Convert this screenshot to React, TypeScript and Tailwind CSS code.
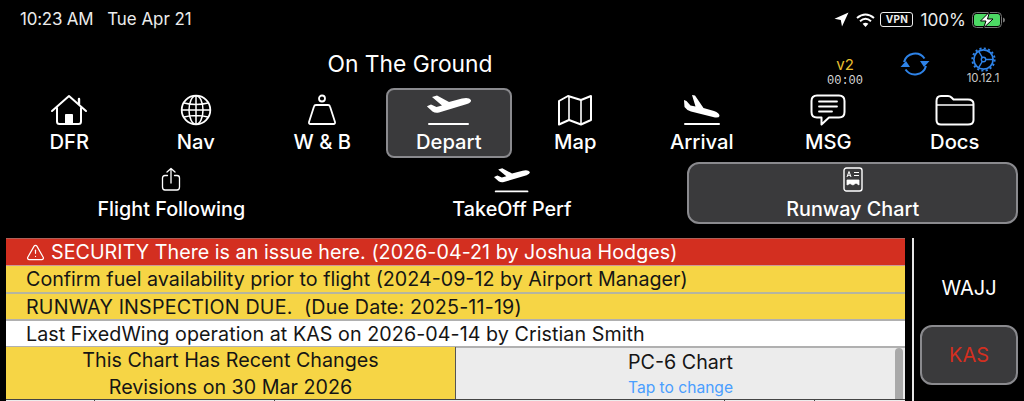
import React from 'react';
import { TriangleAlert } from 'lucide-react';

const IconHouse = () => (
  <svg width="38" height="32" viewBox="0 0 38 32" fill="none" stroke="white" strokeWidth="2" strokeLinecap="round" strokeLinejoin="round">
    <path d="M2 17 L19 2 L36 17" />
    <path d="M29 10 V5" strokeWidth="2.4" />
    <path d="M7 14 V27.5 Q7 30 9.5 30 H28.5 Q31 30 31 27.5 V14" />
    <path d="M15.5 30 V20.5 H22.5 V30 Z" fill="white" stroke="white" strokeWidth="1" />
  </svg>
);

const IconGlobe = () => (
  <svg width="32" height="32" viewBox="0 0 32 32" fill="none" stroke="white" strokeWidth="1.5">
    <circle cx="16" cy="16" r="14.3" strokeWidth="1.8" />
    <ellipse cx="16" cy="16" rx="7" ry="14.3" />
    <path d="M16 2 V30 M2 16 H30 M4 9 Q16 12 28 9 M4 23 Q16 20 28 23" />
  </svg>
);

const IconWeight = () => (
  <svg width="30" height="32" viewBox="0 0 30 32" fill="none" stroke="white" strokeWidth="1.8" strokeLinejoin="round">
    <circle cx="15" cy="4.5" r="3" />
    <path d="M9 11 H21 Q22.6 11 23 12.5 L28 28 Q28.4 30 26.5 30 H3.5 Q1.6 30 2 28 L7 12.5 Q7.4 11 9 11 Z" />
  </svg>
);

const IconTakeoff = () => (
  <svg width="46" height="32" viewBox="0 0 46 32" fill="white">
    <path d="M3 30 H42" stroke="white" strokeWidth="2" strokeLinecap="round" />
    <path d="M6 3 L11 1.5 L23 8 L36 4.5 Q43 3 45 6 Q45.5 8.5 41 10 L13 18.5 Q9.5 19.5 6.5 17.5 L1 12.5 L1.5 12 L5 10.5 L10.5 13 L16 11.5 Z" />
  </svg>
);

const IconLanding = () => (
  <svg width="38" height="32" viewBox="0 0 38 32" fill="white">
    <path d="M2 30 H36" stroke="white" strokeWidth="2" strokeLinecap="round" />
    <path d="M1 6 L3.5 7 L7.5 11.5 L12.5 12.5 L9 1 L12 1.5 L20.5 14 L31 17 Q36.5 19 36.5 22 Q36 24 32 23.5 L8 17.5 Q3.5 16 1.5 13 Z" />
  </svg>
);

const IconMap = () => (
  <svg width="36" height="32" viewBox="0 0 36 32" fill="none" stroke="white" strokeWidth="2" strokeLinejoin="round">
    <path d="M2 7 L11 2 L24 6 L34 2 V26 L24 30.5 L12 26 L2 30.5 Z" />
    <path d="M12 2 V26 M24 6 V30" strokeWidth="1.6" />
  </svg>
);

const IconMsg = () => (
  <svg width="36" height="32" viewBox="0 0 36 32" fill="none" stroke="white" strokeWidth="2" strokeLinejoin="round" strokeLinecap="round">
    <path d="M7 1.5 H29 Q34.5 1.5 34.5 7 V18 Q34.5 23.5 29 23.5 H19 L11.5 30.5 V23.5 H7 Q1.5 23.5 1.5 18 V7 Q1.5 1.5 7 1.5 Z" />
    <path d="M9 7.5 H27 M9 12.5 H27 M9 17.5 H22" strokeWidth="1.8" />
  </svg>
);

const IconFolder = () => (
  <svg width="40" height="32" viewBox="0 0 40 32" fill="none" stroke="white" strokeWidth="2" strokeLinejoin="round">
    <path d="M1.5 7 Q1.5 2 6 2 H13 Q15 2 16.5 3.5 L18.5 5.5 H33 Q38.5 5.5 38.5 10 V26 Q38.5 30.5 33 30.5 H6 Q1.5 30.5 1.5 26 Z" />
    <path d="M2 11 H38" strokeWidth="1.6" />
  </svg>
);

const IconShare = () => (
  <svg width="20" height="24" viewBox="0 0 20 24" fill="none" stroke="white" strokeWidth="1.3" strokeLinecap="round" strokeLinejoin="round">
    <path d="M10 16 V1.5 M6 5 L10 1.5 L14 5" />
    <path d="M6.5 8.5 H4 Q1.5 8.5 1.5 11 V20 Q1.5 23 4 23 H16 Q18.5 23 18.5 20 V11 Q18.5 8.5 16 8.5 H13.5" />
  </svg>
);

const IconTakeoffSmall = () => (
  <svg width="38" height="26" viewBox="0 0 46 32" fill="white">
    <path d="M3 30 H42" stroke="white" strokeWidth="2.4" strokeLinecap="round" />
    <path d="M6 3 L11 1.5 L23 8 L36 4.5 Q43 3 45 6 Q45.5 8.5 41 10 L13 18.5 Q9.5 19.5 6.5 17.5 L1 12.5 L1.5 12 L5 10.5 L10.5 13 L16 11.5 Z" />
  </svg>
);

const IconChart = () => (
  <svg width="20" height="25" viewBox="0 0 20 25" fill="none" stroke="white">
    <rect x="1" y="1" width="18" height="23" rx="2.5" strokeWidth="1.4" />
    <path d="M4 10 L6 4.5 L8 10 M4.8 8.3 H7.2 M11 5.5 H16 M11 8.5 H16" strokeWidth="1" />
    <path d="M4 13 H16 V18 L13 16 L10 18 L7 16.5 L4 18 Z" fill="white" strokeWidth="0.8" />
  </svg>
);

const IconSync = () => (
  <svg width="30" height="26" viewBox="0 0 30 26" fill="none" stroke="#2e83e8" strokeWidth="2">
    <path d="M4 11 A11.5 11.5 0 0 1 24.5 7.5" />
    <path d="M26 15 A11.5 11.5 0 0 1 5.5 18.5" />
    <path d="M24 14 L29.5 8 H20 Z" fill="#2e83e8" stroke="none" transform="translate(0 2)" />
    <path d="M6 12 L0.5 18 H10 Z" fill="#2e83e8" stroke="none" transform="translate(0 -2)" />
  </svg>
);

const IconGear = () => (
  <svg width="25" height="25" viewBox="0 0 26 26" fill="none" stroke="#2e83e8">
    <circle cx="13" cy="13" r="10" strokeWidth="1.8" />
    <circle cx="13" cy="13" r="11.6" strokeWidth="2" strokeDasharray="2.2 2.35" />
    <circle cx="13" cy="13" r="2.3" strokeWidth="1.4" />
    <path d="M15.3 13 H23 M11.8 11 L8 4.5 M11.8 15 L8 21.5" strokeWidth="1.4" />
  </svg>
);

const IconWifi = () => (
  <svg width="19" height="14" viewBox="0 0 19 14" fill="none" stroke="white" strokeWidth="2">
    <path d="M1 5 Q9.5 -2 18 5" />
    <path d="M4 8.2 Q9.5 3.4 15 8.2" />
    <path d="M9.5 14 L6.6 10.8 Q9.5 8.5 12.4 10.8 Z" fill="white" stroke="none" />
  </svg>
);

const IconBattery = () => (
  <svg width="34" height="16" viewBox="0 0 34 16" fill="none">
    <rect x="0.5" y="0.5" width="29" height="15" rx="4" stroke="#777" />
    <rect x="2" y="2" width="26" height="12" rx="2.5" fill="#4cd964" />
    <path d="M31 5.5 Q33 6 33 8 Q33 10 31 10.5 Z" fill="#777" />
    <path d="M17.5 0 L8.5 9 H14 L11.5 16 L21 7 H15.5 Z" fill="white" stroke="black" strokeWidth="1" />
  </svg>
);

const navItems: { label: string; icon: React.ReactNode; active?: boolean }[] = [
  { label: 'DFR', icon: <IconHouse /> },
  { label: 'Nav', icon: <IconGlobe /> },
  { label: 'W & B', icon: <IconWeight /> },
  { label: 'Depart', icon: <IconTakeoff />, active: true },
  { label: 'Map', icon: <IconMap /> },
  { label: 'Arrival', icon: <IconLanding /> },
  { label: 'MSG', icon: <IconMsg /> },
  { label: 'Docs', icon: <IconFolder /> },
];

const subItems: { label: string; icon: React.ReactNode; active?: boolean }[] = [
  { label: 'Flight Following', icon: <IconShare /> },
  { label: 'TakeOff Perf', icon: <IconTakeoffSmall /> },
  { label: 'Runway Chart', icon: <IconChart />, active: true },
];

export default function App() {
  return (
    <div className="w-[1024px] h-[401px] bg-black overflow-hidden flex flex-col text-white font-['Inter','Liberation_Sans',sans-serif]">
      {/* Status bar */}
      <div className="h-[40px] flex items-center justify-between pl-[20px] pr-[18px] text-[16.9px] text-[#ececec]">
        <div className="flex gap-[14px]">
          <span className="tracking-[-0.2px]">10:23 AM</span>
          <span>Tue Apr 21</span>
        </div>
        <div className="flex items-center">
          <svg width="15" height="15" viewBox="0 0 15 15" fill="white" className="mr-[7px]">
            <path d="M14.5 0.5 L8 14.5 L6.8 8 L0.5 6.8 Z" />
          </svg>
          <IconWifi />
          <span className="ml-[5px] border border-[#eee] rounded-[3px] h-[15px] w-[33px] flex items-center justify-center text-[10px] font-bold tracking-wide">VPN</span>
          <span className="ml-[7px] text-[17.2px]">100%</span>
          <span className="ml-[6px] flex"><IconBattery /></span>
        </div>
      </div>

      {/* Title row */}
      <div className="h-[48px] flex">
        <div className="w-[820px] text-center text-[22.8px] leading-[48px]">On The Ground</div>
        <div className="w-[50px] flex flex-col items-center pt-[16px]">
          <span className="text-[15px] leading-[18px] text-[#e8bf30]">v2</span>
          <span className="text-[12px] leading-[15px] text-[#d8d8d8] font-['Liberation_Mono',monospace]">00:00</span>
        </div>
        <div className="w-[70px] ml-[10px] flex justify-center pt-[11px]">
          <span className="h-fit flex"><IconSync /></span>
        </div>
        <div className="w-[68px] pr-[2px] flex flex-col items-center pt-[7px]">
          <IconGear />
          <span className="text-[11.5px] leading-[12px] text-[#c8c8c8]">10.12.1</span>
        </div>
      </div>

      {/* Main nav */}
      <div className="h-[70px] px-[6px] grid grid-cols-8">
        {navItems.map((item) => (
          <div
            key={item.label}
            className={`flex flex-col items-center rounded-lg ${item.active ? 'bg-[#3a3a3c] border-2 border-[#8a8a8e]' : 'border-2 border-transparent'}`}
          >
            <div className="h-[36px] mt-[4px] flex items-start">{item.icon}</div>
            <span className="text-[20.2px] leading-[24px] font-medium">{item.label}</span>
          </div>
        ))}
      </div>

      {/* Sub nav */}
      <div className="h-[62px] mt-[4px] px-[6px] grid grid-cols-3 gap-[10px]">
        {subItems.map((item) => (
          <div
            key={item.label}
            className={`flex flex-col items-center rounded-xl border-2 ${item.active ? 'bg-[#3a3a3c] border-[#8a8a8e]' : 'border-transparent'}`}
          >
            <div className="h-[30px] mt-[3px] flex items-start">{item.icon}</div>
            <span className="text-[19.8px] leading-[24px] font-medium">{item.label}</span>
          </div>
        ))}
      </div>

      {/* Notices and airports */}
      <div className="flex-1 mt-[14px] pl-[6px] flex min-h-0">
        <div className="w-[899px] flex flex-col text-[19.7px] text-[#151515]">
          <div className="h-[28px] bg-[#d32f20] border-t border-[#b06058] border-b border-b-[#c99] text-white flex items-center pl-[20px] pt-px tracking-[0.03px]">
            <TriangleAlert size={19} strokeWidth={1.5} className="mr-[6px]" />
            <span>SECURITY There is an issue here. (2026-04-21 by Joshua Hodges)</span>
          </div>
          <div className="h-[28px] bg-[#f6d545] border-b-2 border-[#b5b5a0] flex items-center pl-[20px] pt-[2px]">
            Confirm fuel availability prior to flight (2024-09-12 by Airport Manager)
          </div>
          <div className="h-[27px] bg-[#f6d545] border-b-2 border-[#b0b0b0] flex items-center pl-[20px] pt-[2px] whitespace-pre tracking-[0.17px]">
            RUNWAY INSPECTION DUE.  (Due Date: 2025-11-19)
          </div>
          <div className="h-[27px] bg-white border-b-2 border-[#b0b0b0] flex items-center pl-[20px] pt-[2px] tracking-[0.06px]">
            Last FixedWing operation at KAS on 2026-04-14 by Cristian Smith
          </div>
          <div className="h-[51px] flex">
            <div className="w-[450px] bg-[#f6d545] border-r border-[#555] flex flex-col items-center leading-[27px] -mt-px pt-px">
              <span className="-mt-px">This Chart Has Recent Changes</span>
              <span>Revisions on 30 Mar 2026</span>
            </div>
            <div className="flex-1 bg-[#ececec] relative flex flex-col items-center">
              <span className="leading-[28px]">PC-6 Chart</span>
              <span className="text-[15.6px] leading-[24px] text-[#4a9eff]">Tap to change</span>
              <div className="absolute right-[2px] top-0 bottom-0 w-[8px] bg-[#a9a9a9] rounded-t-[4px]" />
            </div>
          </div>
          <div className="flex-1 border-t border-[#444] bg-[#ececec] flex">
            <div className="w-[89px] border-r border-[#444]" />
            <div className="w-[180px] border-r border-[#444]" />
            <div className="w-[450px] border-r border-[#444]" />
            <div className="w-[90px] border-r border-[#444]" />
          </div>
        </div>
        <div className="ml-[7px] w-[2px] bg-[#e6e6e6]" />
        <div className="ml-[6px] w-[98px] flex flex-col items-center">
          <span className="mt-[36px] text-[20px] leading-[28px]">WAJJ</span>
          <div className="mt-[23px] w-full h-[60px] rounded-xl border-2 border-[#8a8a8e] bg-[#3a3a3c] flex items-center justify-center text-[20px] text-[#d32f20]">
            KAS
          </div>
        </div>
      </div>
    </div>
  );
}
